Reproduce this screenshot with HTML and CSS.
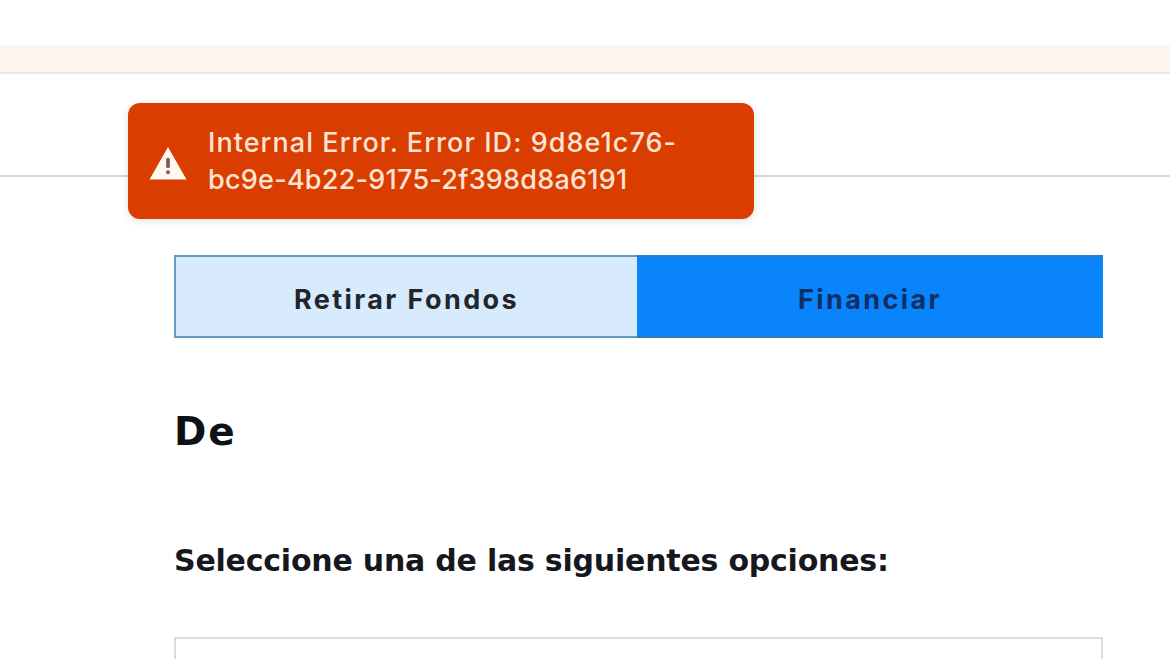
FILE: index.html
```html
<!DOCTYPE html>
<html lang="es">
<head>
    <meta charset="UTF-8">
    <meta name="viewport" content="width=device-width, initial-scale=1.0">
    <title>Financiar</title>
    <link rel="stylesheet" href="styles.css">
</head>
<body>

    <div class="banner"></div>
    <div class="header"></div>

    <!-- Toast -->
    <div class="toast">
        <svg class="toast-icon" viewBox="0 0 38 34" width="38" height="34">
            <path d="M19 1 L37.5 33.5 H0.5 Z" fill="#fff6f0"/>
            <rect x="17.2" y="12" width="3.6" height="10" rx="1" fill="#7d5a50"/>
            <rect x="17.2" y="24.5" width="3.6" height="3.6" rx="1" fill="#7d5a50"/>
        </svg>
        <p class="toast-text">
            <span class="toast-line toast-line-id">Internal Error. Error ID: 9d8e1c76-</span>
            <span class="toast-line">bc9e-4b22-9175-2f398d8a6191</span>
        </p>
    </div>

    <div class="content">
        <div class="tabs">
            <div class="tab tab-light">Retirar Fondos</div>
            <div class="tab tab-active">Financiar</div>
        </div>

        <h2 class="section-title">De</h2>
        <h3 class="section-label">Seleccione una de las siguientes opciones:</h3>

        <div class="select-box"></div>
    </div>

</body>
</html>
```

FILE: styles.css
```css
html, body {
    margin: 0;
    padding: 0;
    height: 659px;
    overflow: hidden;
}

body {
    position: relative;
    background: #ffffff;
    font-family: "Inter", "Liberation Sans", sans-serif;
    color: #15171c;
}

.banner {
    height: 27px;
    margin-top: 45px;
    background: #fdf5f0;
    border-bottom: 2px solid #e9e7e6;
}

.header {
    height: 101px;
    border-bottom: 2px solid #d6d8da;
}

.toast {
    position: absolute;
    top: 103px;
    left: 128px;
    width: 626px;
    height: 116px;
    box-sizing: border-box;
    padding-left: 21px;
    display: flex;
    align-items: center;
    gap: 21px;
    background: #d93d00;
    border-radius: 12px;
    box-shadow: 0 2px 8px rgba(0, 0, 0, 0.12);
    color: #fde3d4;
}

.toast-icon {
    flex: none;
    margin-top: 4px;
}

.toast-text {
    margin: 0;
    font-size: 27px;
    font-weight: 500;
    line-height: 37px;
}

.toast-line {
    display: block;
    white-space: nowrap;
    letter-spacing: 0.25px;
}

.toast-line-id {
    letter-spacing: 1.06px;
}

.content {
    width: 929px;
    margin: 78px 0 0 174px;
}

.tabs {
    display: flex;
    height: 83px;
}

.tab {
    display: flex;
    align-items: center;
    justify-content: center;
    box-sizing: border-box;
    padding-top: 6px;
    font-size: 27px;
    font-weight: 700;
    letter-spacing: 2.4px;
}

.tab-light {
    flex: 0 0 463px;
    background: #d8ebfc;
    border: 2px solid #5f9dbb;
    border-right: none;
    color: #22262c;
}

.tab-active {
    flex: 1;
    background: #0a84fb;
    border-top: 2px solid #2a7fc4;
    border-bottom: 2px solid #2a7fc4;
    color: #0d2f66;
}

.section-title {
    margin: 70px 0 0;
    font-family: "DejaVu Sans", sans-serif;
    font-size: 39px;
    line-height: 48px;
    font-weight: 700;
    letter-spacing: 2px;
    color: #101114;
}

.section-label {
    margin: 85px 0 0;
    font-family: "DejaVu Sans", sans-serif;
    font-size: 30px;
    line-height: 40px;
    font-weight: 700;
    letter-spacing: -0.22px;
    white-space: nowrap;
    color: #16181d;
}

.select-box {
    box-sizing: border-box;
    height: 22px;
    margin-top: 56px;
    border: 2px solid #dcdcdc;
    border-bottom: none;
}
```
